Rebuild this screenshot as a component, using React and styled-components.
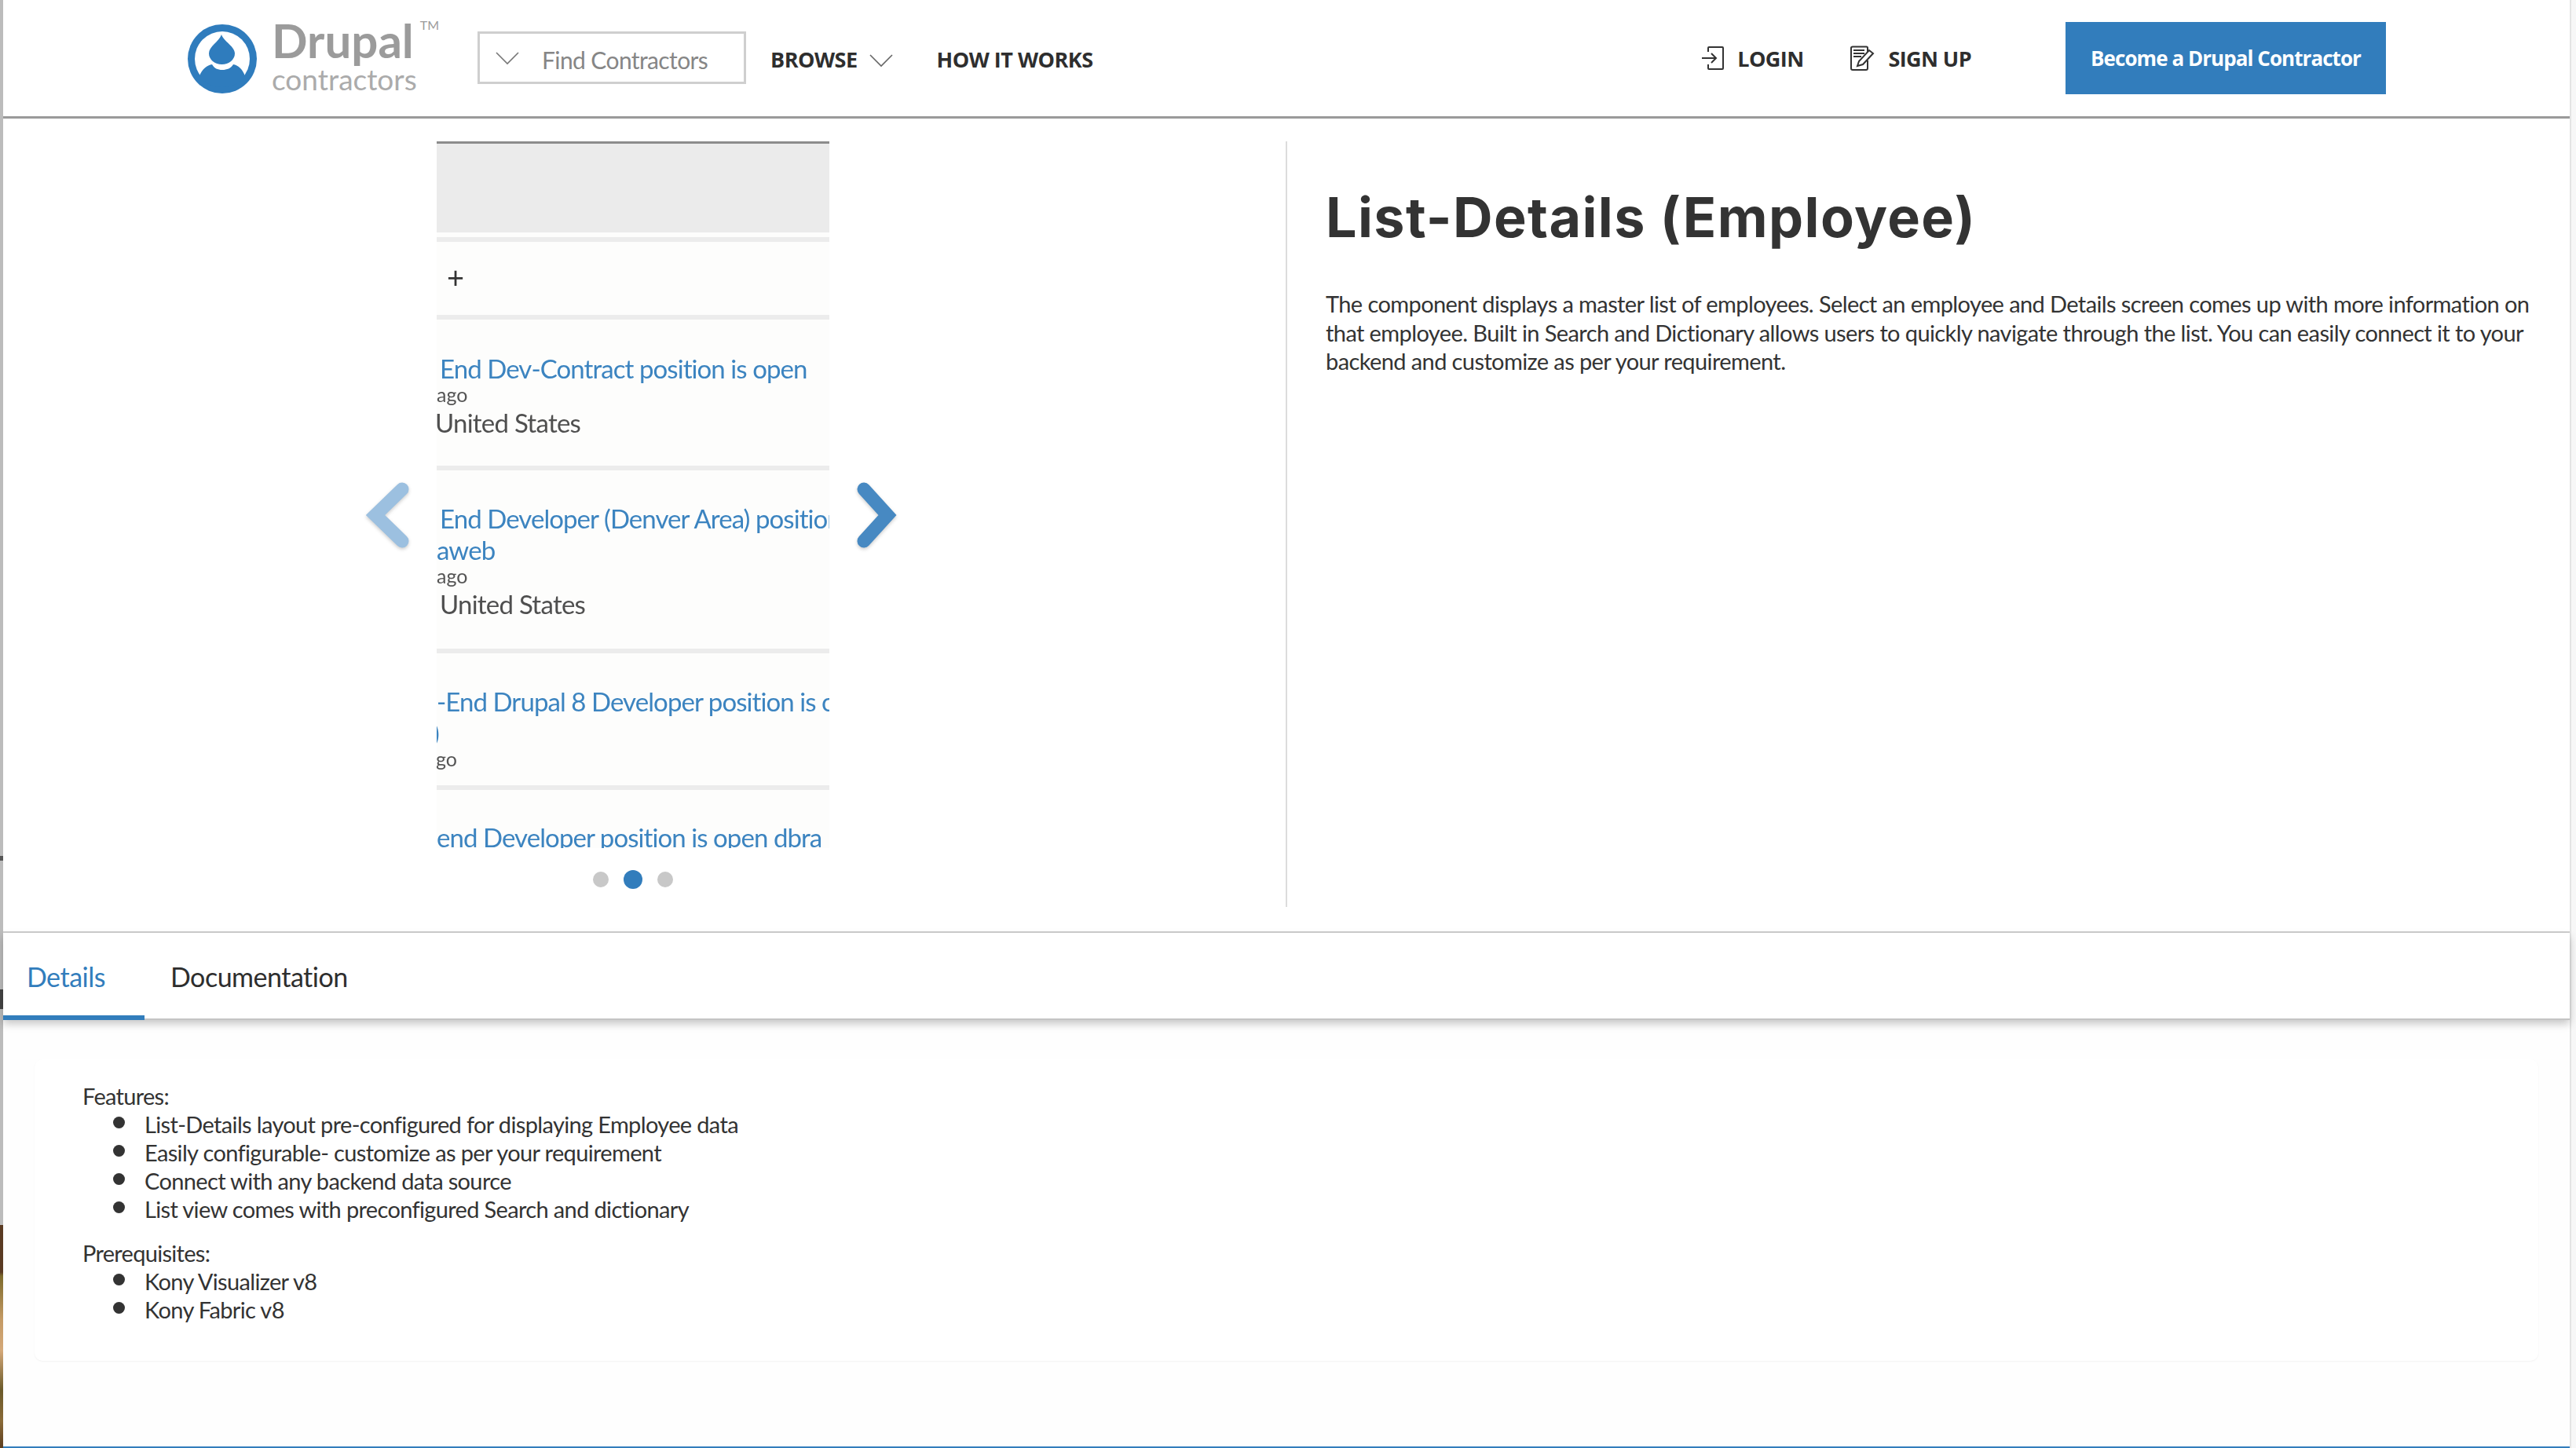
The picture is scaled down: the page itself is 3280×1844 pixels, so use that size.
import React from "react";
import styled, { createGlobalStyle } from "styled-components";

const Global = createGlobalStyle`
  html, body { margin: 0; padding: 0; background: #fff; overflow: hidden; }
  * { box-sizing: border-box; }
  body { font-family: "Lato", "Liberation Sans", sans-serif; color: #333; }
`;

const Page = styled.div`
  display: flex;
  width: 3280px;
  height: 1844px;
`;
const DesktopEdge = styled.div`
  width: 4px;
  flex: none;
  background: linear-gradient(
    180deg,
    #bcbcbc 0,
    #bcbcbc 1090px,
    #555 1090px,
    #555 1096px,
    #bcbcbc 1096px,
    #bcbcbc 1260px,
    #444 1260px,
    #444 1285px,
    #bcbcbc 1285px,
    #bcbcbc 1560px,
    #5a3a22 1560px,
    #5a3a22 1620px,
    #7d6a2c 1625px,
    #c49a64 1680px,
    #d4a878 1720px,
    #6b5a2a 1770px,
    #8a6a38 1810px,
    #5c3e20 1844px
  );
`;
const Window = styled.div`
  flex: 1;
  min-width: 0;
  display: flex;
  flex-direction: column;
  background: #fff;
  border-bottom: 2px solid #327dbc;
`;
const ScrollTrack = styled.div`
  width: 8px;
  flex: none;
  background: #f7f7f7;
  border-left: 2px solid #e4e4e4;
`;

const Header = styled.header`
  height: 151px;
  flex: none;
  display: flex;
  align-items: flex-start;
  padding: 0 234px 0 235px;
  border-bottom: 3px solid #9a9a9a;
`;
const Logo = styled.div`
  display: flex;
  width: 369px;
  flex: none;
  padding-top: 31px;
`;
const LogoMark = styled.svg`
  width: 88px;
  height: 88px;
  flex: none;
`;
const LogoWords = styled.div`
  display: flex;
  flex-direction: column;
  margin-left: 19px;
  color: #9b9b9b;
  line-height: 1;
`;
const LogoName = styled.div`
  display: flex;
  font-size: 60px;
  font-weight: 700;
  line-height: 52px;
  margin-top: -6px;
`;
const Tm = styled.span`
  font-size: 16px;
  line-height: 17px;
  font-weight: 400;
  margin: -2px 0 0 8px;
`;
const LogoSub = styled.div`
  font-size: 37px;
  line-height: 40px;
  color: #ababab;
  margin-top: 4px;
`;
const Finder = styled.div`
  width: 342px;
  height: 67px;
  flex: none;
  margin-top: 40px;
  display: flex;
  align-items: center;
  padding-left: 20px;
  border: 3px solid #cfcfcf;
  font-size: 30px;
  letter-spacing: -0.6px;
  color: #868686;
`;
const FinderText = styled.span`
  margin-left: 29px;
  margin-top: 4px;
`;
const NavItems = styled.nav`
  display: flex;
  align-items: center;
  height: 148px;
  margin-left: 31px;
  font-family: "Open Sans", "Liberation Sans", sans-serif;
  font-weight: 700;
  font-size: 27px;
  color: #2e2e2e;
`;
const NavLabel = styled.span`
  letter-spacing: -0.5px;
  margin-top: 2px;
`;
const BrowseChevron = styled.svg`
  width: 30px;
  height: 18px;
  margin: 6px 56px 0 15px;
`;
const AuthLinks = styled.div`
  display: flex;
  align-items: flex-start;
  height: 148px;
  margin-left: auto;
  font-family: "Open Sans", "Liberation Sans", sans-serif;
  font-weight: 700;
  font-size: 27px;
  color: #2e2e2e;
`;
const AuthLink = styled.a`
  display: flex;
  align-items: center;
  height: 148px;
  gap: ${(p) => p.$gap}px;
  margin-right: ${(p) => p.$after}px;
  letter-spacing: -0.6px;
`;
const AuthIcon = styled.svg`
  width: 32px;
  height: 32px;
  flex: none;
`;
const CtaButton = styled.a`
  width: 408px;
  height: 92px;
  flex: none;
  margin-top: 28px;
  margin-left: 120px;
  display: flex;
  align-items: center;
  justify-content: center;
  background: #327dbc;
  color: #fff;
  font-family: "Open Sans", "Liberation Sans", sans-serif;
  font-weight: 700;
  font-size: 26px;
  letter-spacing: -0.95px;
`;

const Hero = styled.section`
  height: 1037px;
  flex: none;
  display: flex;
  padding: 29px 0 31px;
  border-bottom: 2px solid #cfcfcf;
`;
const CarouselColumn = styled.div`
  width: 1633px;
  flex: none;
  display: flex;
  flex-direction: column;
  padding-left: 458px;
`;
const CarouselRow = styled.div`
  display: flex;
  align-items: flex-start;
`;
const Arrow = styled.svg`
  width: 60px;
  height: 88px;
  flex: none;
  margin-top: 432px;
  margin-left: ${(p) => p.$left}px;
  filter: drop-shadow(0 2px 2px rgba(0, 0, 0, 0.2));
`;
const Phone = styled.div`
  width: 500px;
  height: 900px;
  flex: none;
  margin-left: 34px;
  overflow: hidden;
  background: #fdfdfc;
  filter: blur(0.5px);
`;
const PhoneHeader = styled.div`
  height: 116px;
  background: #ebebeb;
  border-top: 3px solid #8c8c8c;
`;
const PhoneRule = styled.div`
  height: 6px;
  background: #ececec;
  margin-top: ${(p) => p.$top || 0}px;
`;
const PlusRow = styled.div`
  height: 93px;
  padding: 22px 0 0 13px;
  font-size: 38px;
  line-height: 44px;
  color: #333;
`;
const JobRow = styled.div`
  height: ${(p) => p.$height}px;
  padding-top: ${(p) => p.$pad}px;
  white-space: nowrap;
`;
const JobTitle = styled.div`
  font-size: 33px;
  line-height: 40px;
  color: #3c84c0;
  letter-spacing: -0.93px;
  margin-left: ${(p) => p.$inset || 0}px;
`;
const JobAge = styled.div`
  font-size: 25px;
  line-height: 30px;
  margin-top: -2px;
  color: #555;
  margin-left: ${(p) => p.$inset || 0}px;
`;
const JobPlace = styled.div`
  font-size: 33px;
  line-height: 40px;
  margin-top: 1px;
  color: #4f4f4f;
  letter-spacing: -0.75px;
  margin-left: ${(p) => p.$inset || 0}px;
`;
const Dots = styled.div`
  display: flex;
  align-items: center;
  gap: 19px;
  margin-top: 28px;
  margin-left: 293px;
`;
const Dot = styled.span`
  width: ${(p) => (p.$on ? 24 : 20)}px;
  height: ${(p) => (p.$on ? 24 : 20)}px;
  border-radius: 50%;
  background: ${(p) => (p.$on ? "#327dbc" : "#c8c8c8")};
`;

const Summary = styled.div`
  flex: 1;
  border-left: 2px solid #dcdcdc;
  padding: 55px 20px 0 49px;
`;
const Title = styled.h1`
  margin: 0;
  font-family: "Inter", "Liberation Sans", sans-serif;
  font-weight: 700;
  font-size: 70px;
  line-height: 84px;
  letter-spacing: 1.4px;
  color: #333;
  white-space: nowrap;
`;
const Lead = styled.p`
  margin: 50px 0 0;
  font-size: 29px;
  line-height: 36.5px;
  letter-spacing: -0.6px;
  color: #333;
`;

const Tabs = styled.div`
  height: 111px;
  flex: none;
  display: flex;
  position: relative;
  border-bottom: 2px solid #c4c4c4;
  box-shadow: 0 5px 10px rgba(0, 0, 0, 0.22);
`;
const Tab = styled.div`
  height: 111px;
  flex: none;
  width: ${(p) => p.$width}px;
  padding: 32px 0 0 ${(p) => p.$pad}px;
  font-size: 34px;
  line-height: 48px;
  letter-spacing: -0.5px;
  color: ${(p) => (p.$active ? "#327dbc" : "#2e2e2e")};
  border-bottom: 6px solid ${(p) => (p.$active ? "#327dbc" : "transparent")};
`;

const Body = styled.div`
  flex: 1;
  padding: 50px 40px 0;
  background: #fefefe;
`;
const Card = styled.div`
  height: 384px;
  padding: 29px 61px;
  border-radius: 10px;
  background: #fff;
  box-shadow: 0 1px 2px rgba(0, 0, 0, 0.05);
  font-size: 29px;
  line-height: 36px;
  letter-spacing: -0.65px;
  color: #333;
`;
const SectionLabel = styled.div`
  letter-spacing: -0.7px;
`;
const Bullets = styled.ul`
  list-style: none;
  margin: 0 0 20px;
  padding: 0 0 0 39px;
`;
const Bullet = styled.li`
  display: flex;
  &::before {
    content: "";
    width: 15px;
    height: 15px;
    flex: none;
    margin: 8px 25px 0 0;
    border-radius: 50%;
    background: #333;
  }
`;

function App() {
  return (
    <Page>
      <Global />
      <DesktopEdge />
      <Window>
        <Header>
          <Logo>
            <LogoMark viewBox="0 0 88 88">
              <circle cx="44" cy="44" r="44" fill="#2f7cbd" />
              <circle cx="44" cy="44" r="35" fill="#fff" />
              <path
                d="M43 13 C46 22 60 28 60 37 A16.5 14 0 0 1 27 37 C27 28 40 22 43 13Z"
                fill="#2f7cbd"
              />
              <path
                d="M15 66 C18 57 25 52 31 51 C34 56 38 58 44 58 C50 58 55 56 58 51 C64 52 70 57 73 66 A37 37 0 0 1 44 80 A37 37 0 0 1 15 66Z"
                fill="#2f7cbd"
              />
            </LogoMark>
            <LogoWords>
              <LogoName>
                Drupal<Tm>TM</Tm>
              </LogoName>
              <LogoSub>contractors</LogoSub>
            </LogoWords>
          </Logo>
          <Finder>
            <svg width="30" height="18" viewBox="0 0 30 18">
              <path d="M1 2 L15 16 L29 2" fill="none" stroke="#777" strokeWidth="1.6" />
            </svg>
            <FinderText>Find Contractors</FinderText>
          </Finder>
          <NavItems>
            <NavLabel>BROWSE</NavLabel>
            <BrowseChevron viewBox="0 0 30 18">
              <path d="M1 2 L15 16 L29 2" fill="none" stroke="#666" strokeWidth="1.6" />
            </BrowseChevron>
            <NavLabel>HOW IT WORKS</NavLabel>
          </NavItems>
          <AuthLinks>
            <AuthLink $after={58} $gap={14}>
              <AuthIcon viewBox="0 0 32 32">
                <path
                  d="M9 8 V3 Q9 2 10 2 H27 Q28 2 28 3 V29 Q28 30 27 30 H10 Q9 30 9 29 V24"
                  fill="none"
                  stroke="#333"
                  strokeWidth="2"
                />
                <path d="M1 16 H19 M13 10 L19 16 L13 22" fill="none" stroke="#333" strokeWidth="2" />
              </AuthIcon>
              LOGIN
            </AuthLink>
            <AuthLink $after={0} $gap={18}>
              <AuthIcon viewBox="0 0 32 32">
                <path
                  d="M23 11 V3 Q23 1.500 21.500 1.500 H4 Q2 1.500 2 3 V29 Q2 31 4 31 H21 Q23 31 23 29 V19"
                  fill="none"
                  stroke="#333"
                  strokeWidth="2"
                />
                <path d="M5 6 H19 M5 10 H19 M5 14 H15" stroke="#333" strokeWidth="2.2" />
                <path d="M10 26 L12 20 L25 6 L30 10 L17 24Z" fill="#fff" stroke="#333" strokeWidth="2" />
              </AuthIcon>
              SIGN UP
            </AuthLink>
            <CtaButton>Become a Drupal Contractor</CtaButton>
          </AuthLinks>
        </Header>

        <Hero>
          <CarouselColumn>
            <CarouselRow>
              <Arrow viewBox="0 0 60 88" $left={0}>
                <path d="M50 11 L16 44 L50 77" fill="none" stroke="#9cc0e0" strokeWidth="17" strokeLinejoin="miter" strokeLinecap="round" />
              </Arrow>
              <Phone>
                <PhoneHeader />
                <PhoneRule $top={6} />
                <PlusRow>+</PlusRow>
                <PhoneRule />
                <JobRow $height={186} $pad={42}>
                  <JobTitle $inset={4}>End Dev-Contract position is open</JobTitle>
                  <JobAge>ago</JobAge>
                  <JobPlace $inset={-2}>United States</JobPlace>
                </JobRow>
                <PhoneRule />
                <JobRow $height={227} $pad={41}>
                  <JobTitle $inset={4}>End Developer (Denver Area) position is open</JobTitle>
                  <JobTitle>aweb</JobTitle>
                  <JobAge>ago</JobAge>
                  <JobPlace $inset={4}>United States</JobPlace>
                </JobRow>
                <PhoneRule />
                <JobRow $height={168} $pad={41}>
                  <JobTitle>-End Drupal 8 Developer position is open</JobTitle>
                  <JobTitle $inset={-5}>)</JobTitle>
                  <JobAge $inset={-1}>go</JobAge>
                </JobRow>
                <PhoneRule />
                <JobRow $height={60} $pad={40}>
                  <JobTitle>end Developer position is open dbra</JobTitle>
                </JobRow>
              </Phone>
              <Arrow viewBox="0 0 60 88" $left={32}>
                <path d="M12 11 L42 44 L12 77" fill="none" stroke="#4789c2" strokeWidth="17" strokeLinejoin="miter" strokeLinecap="round" />
              </Arrow>
            </CarouselRow>
            <Dots>
              <Dot />
              <Dot $on />
              <Dot />
            </Dots>
          </CarouselColumn>
          <Summary>
            <Title>List-Details (Employee)</Title>
            <Lead>
              The component displays a master list of employees. Select an employee and Details screen comes up with more information on that employee. Built in Search and Dictionary allows users to quickly navigate through the list. You can easily connect it to your backend and customize as per your requirement.
            </Lead>
          </Summary>
        </Hero>

        <Tabs>
          <Tab $active $width={180} $pad={30}>Details</Tab>
          <Tab $width={400} $pad={33}>Documentation</Tab>
        </Tabs>

        <Body>
          <Card>
            <SectionLabel>Features:</SectionLabel>
            <Bullets>
              <Bullet>List-Details layout pre-configured for displaying Employee data</Bullet>
              <Bullet>Easily configurable- customize as per your requirement</Bullet>
              <Bullet>Connect with any backend data source</Bullet>
              <Bullet>List view comes with preconfigured Search and dictionary</Bullet>
            </Bullets>
            <SectionLabel>Prerequisites:</SectionLabel>
            <Bullets>
              <Bullet>Kony Visualizer v8</Bullet>
              <Bullet>Kony Fabric v8</Bullet>
            </Bullets>
          </Card>
        </Body>
      </Window>
      <ScrollTrack />
    </Page>
  );
}

export default App;
